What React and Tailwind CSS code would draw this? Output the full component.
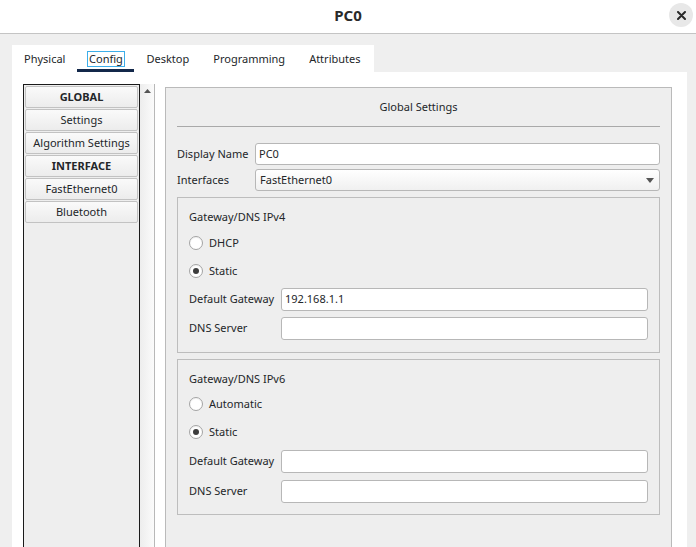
import React from "react";

const font = { fontFamily: '"Noto Sans", "Open Sans", sans-serif' };

function Radio({ checked, label }) {
  return (
    <div className="flex items-center h-[20px]">
      <div className="w-[14px] h-[14px] rounded-full border border-[#a4a4a4] bg-white flex items-center justify-center shadow-[inset_0_1px_1px_rgba(0,0,0,0.06)]">
        {checked && <div className="w-[6px] h-[6px] rounded-full bg-[#3d3d3d]" />}
      </div>
      <span className="ml-[6px]">{label}</span>
    </div>
  );
}

function Field({ label, value, labelW = "w-[92px]", h = "h-[23px]" }) {
  return (
    <div className="flex items-center">
      <span className={`${labelW} shrink-0`}>{label}</span>
      <div className={`flex-1 ${h} bg-white border border-[#b7b7b7] rounded-[3px] flex items-center pl-[3px]`}>
        {value}
      </div>
    </div>
  );
}

function GroupBox({ title, r1, gateway, gap1, dgGap, dnsGap, pb }) {
  return (
    <div className={`border border-[#bdbdbd] px-[11px] pt-[11px] ${pb}`}>
      <div className="h-[16px] leading-[16px]">{title}</div>
      <div className={gap1}>
        <Radio checked={false} label={r1} />
      </div>
      <div className="mt-[8px]">
        <Radio checked={true} label="Static" />
      </div>
      <div className={dgGap}>
        <Field label="Default Gateway" value={gateway} />
      </div>
      <div className={dnsGap}>
        <Field label="DNS Server" value="" />
      </div>
    </div>
  );
}

const items = [
  { t: "GLOBAL", b: true },
  { t: "Settings" },
  { t: "Algorithm Settings" },
  { t: "INTERFACE", b: true },
  { t: "FastEthernet0" },
  { t: "Bluetooth" },
];

export default function App() {
  return (
    <div
      className="w-[696px] h-[547px] bg-[#efefef] overflow-hidden flex flex-col text-[11px] text-[#232629]"
      style={font}
    >
      {/* title bar */}
      <div className="h-[34px] shrink-0 bg-white border-b border-[#c4c4c4] relative flex items-center justify-center pb-[3px]">
        <span className="text-[15px] font-bold text-[#2a2a2a]">PC0</span>
        <div className="absolute right-[3px] top-[3px] w-[24px] h-[24px] rounded-full bg-[#e8e8e8] flex items-center justify-center">
          <svg width="9" height="9" viewBox="0 0 9 9">
            <path d="M1 1 L8 8 M8 1 L1 8" stroke="#2a2a2a" strokeWidth="2" strokeLinecap="round" />
          </svg>
        </div>
      </div>

      <div className="flex-1 flex flex-col pl-[12px] pr-[9px] pt-[11px] min-h-0">
        {/* tabs */}
        <div className="flex h-[27px] w-[362px] bg-white shrink-0 pt-[1px]">
          <div className="px-[12px] flex items-center">Physical</div>
          <div className="w-[57px] relative flex items-center justify-center">
            <span className="border border-[#3daee9] px-[1px] leading-[14px]">Config</span>
            <div className="absolute left-0 right-0 bottom-0 h-[3px] bg-[#13284a]" />
          </div>
          <div className="px-[12px] flex items-center">Desktop</div>
          <div className="px-[12px] flex items-center">Programming</div>
          <div className="px-[12px] flex items-center">Attributes</div>
        </div>

        {/* pane */}
        <div className="flex-1 bg-white flex pl-[11px] pt-[12px] min-h-0 overflow-hidden">
          {/* list */}
          <div className="w-[117px] shrink-0 h-[520px] border border-[#1a1a1a] bg-[#eeeeee] pt-[1px] px-[1px] flex flex-col gap-[1px]">
            {items.map((it) => (
              <div
                key={it.t}
                className={`h-[22px] rounded-[2px] border border-[#c2c2c2] bg-gradient-to-b from-[#fafafa] to-[#ececec] flex items-center justify-center ${it.b ? "font-bold" : ""}`}
              >
                {it.t}
              </div>
            ))}
          </div>
          {/* scrollbar */}
          <div className="w-[15px] shrink-0 h-[520px] bg-gradient-to-r from-[#ededed] to-[#fbfbfb] border-r border-[#b8b8b8] flex flex-col">
            <div className="h-[14px] flex items-center justify-center">
              <svg width="7" height="4" viewBox="0 0 7 4">
                <path d="M0 4 L3.5 0 L7 4 Z" fill="#555" />
              </svg>
            </div>
          </div>
          {/* right panel */}
          <div className="ml-[10px] mt-[3px] w-[507px] shrink-0 h-[520px] border border-[#bababa] bg-[#eeeeee] px-[11px]">
            <div className="h-[39px] flex items-center justify-center border-b border-[#a9a9a9]">
              Global Settings
            </div>
            <div className="mt-[16px]">
              <Field label="Display Name" value="PC0" labelW="w-[78px]" h="h-[22px]" />
            </div>
            <div className="mt-[4px] flex items-center">
              <span className="w-[78px] shrink-0">Interfaces</span>
              <div className="flex-1 h-[22px] rounded-[3px] border border-[#b7b7b7] bg-gradient-to-b from-[#ffffff] to-[#f0f0f0] flex items-center pl-[4px] pr-[5px]">
                <span className="flex-1">FastEthernet0</span>
                <svg width="8" height="5" viewBox="0 0 8 5">
                  <path d="M0 0 L8 0 L4 5 Z" fill="#555" />
                </svg>
              </div>
            </div>
            <div className="mt-[6px]">
              <GroupBox
                title="Gateway/DNS IPv4"
                r1="DHCP"
                gateway="192.168.1.1"
                gap1="mt-[8px]"
                dgGap="mt-[7px]"
                dnsGap="mt-[6px]"
                pb="pb-[12px]"
              />
            </div>
            <div className="mt-[6px]">
              <GroupBox
                title="Gateway/DNS IPv6"
                r1="Automatic"
                gateway=""
                gap1="mt-[7px]"
                dgGap="mt-[8px]"
                dnsGap="mt-[7px]"
                pb="pb-[11px]"
              />
            </div>
          </div>
        </div>
      </div>
    </div>
  );
}
